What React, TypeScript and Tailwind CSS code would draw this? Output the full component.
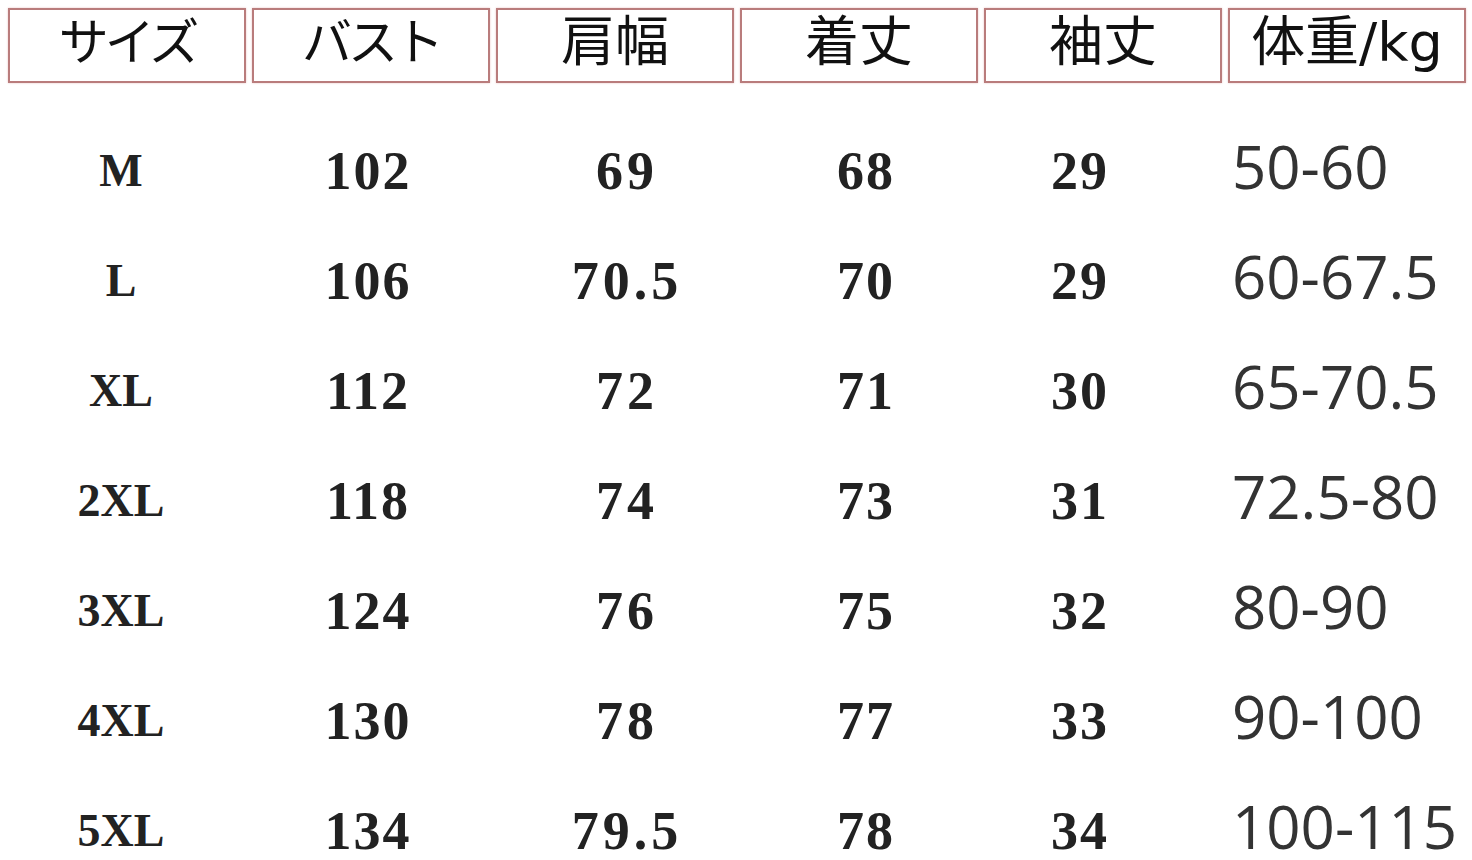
import React from "react";

const headers: { label: string; kana: boolean }[] = [
  { label: "サイズ", kana: true },
  { label: "バスト", kana: true },
  { label: "肩幅", kana: false },
  { label: "着丈", kana: false },
  { label: "袖丈", kana: false },
  { label: "体重/kg", kana: false },
];

const rows: [string, string, string, string, string, string][] = [
  ["M", "102", "69", "68", "29", "50-60"],
  ["L", "106", "70.5", "70", "29", "60-67.5"],
  ["XL", "112", "72", "71", "30", "65-70.5"],
  ["2XL", "118", "74", "73", "31", "72.5-80"],
  ["3XL", "124", "76", "75", "32", "80-90"],
  ["4XL", "130", "78", "77", "33", "90-100"],
  ["5XL", "134", "79.5", "78", "34", "100-115"],
];

export default function App() {
  return (
    <div className="w-[1472px] h-[860px] bg-white overflow-hidden">
      <div className="flex gap-[6px] pl-[8px] pt-[8px]">
        {headers.map((h) => (
          <div
            key={h.label}
            className="w-[238px] h-[75px] border-2 border-[#b97c7c] shadow-[0_0_2px_#e8c4c4] flex items-center justify-center leading-none text-[#111] font-['DejaVu_Sans','Noto_Sans_CJK_JP',sans-serif]"
          >
            {h.kana ? (
              <span className="-mt-[5px] text-[50px] tracking-[-4px]">{h.label}</span>
            ) : (
              <span className="-mt-[5px] text-[54px]">{h.label}</span>
            )}
          </div>
        ))}
      </div>
      <div className="pt-[33px] flex flex-col">
        {rows.map((r) => (
          <div key={r[0]} className="flex h-[110px] items-center text-[#222] font-['Liberation_Serif','Times_New_Roman',serif]">
            <div className="w-[242px] text-center font-bold text-[46px] leading-none">
              {r[0]}
            </div>
            <div className="w-[252px] text-center font-bold text-[54px] leading-none tracking-[2px]">
              {r[1]}
            </div>
            <div className="w-[266px] text-center font-bold text-[54px] leading-none tracking-[4px]">
              {r[2]}
            </div>
            <div className="w-[212px] text-center font-bold text-[54px] leading-none tracking-[2px]">
              {r[3]}
            </div>
            <div className="w-[216px] text-center font-bold text-[54px] leading-none tracking-[2px]">
              {r[4]}
            </div>
            <div className="flex-1 pl-[44px] text-[60px] leading-none text-[#333] -mt-[10px] font-['Open_Sans','Noto_Sans',sans-serif]">
              {r[5]}
            </div>
          </div>
        ))}
      </div>
    </div>
  );
}
